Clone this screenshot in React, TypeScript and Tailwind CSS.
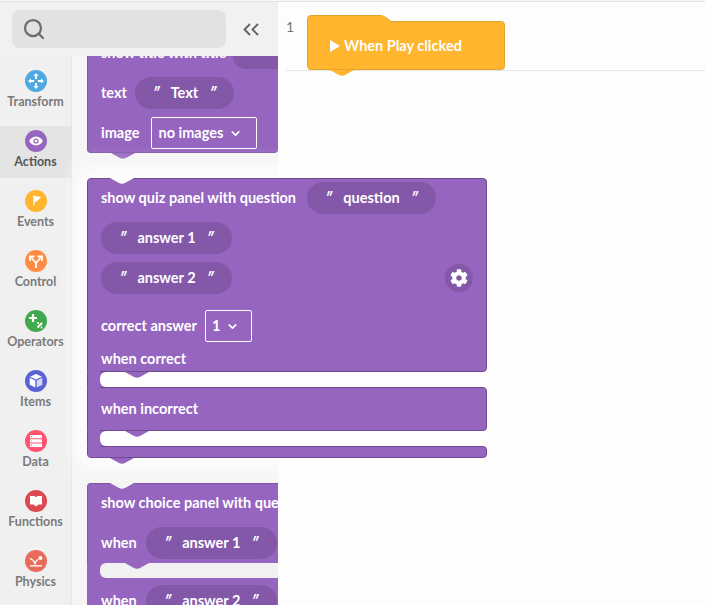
import { ChevronDown, Search } from "lucide-react";
import { FaCog } from "react-icons/fa";
import type { ReactNode } from "react";

const categories: { name: string; color: string; icon: ReactNode }[] = [
  {
    name: "Transform",
    color: "bg-[#4fa8e0]",
    icon: (
      <path
        fill="#fff"
        d="M11 3l2.600 3h-1.700v3.100H10.100V6H8.400zM11 19l-2.600-3h1.700v-3.100h1.800V16h1.700zM3 11l3-2.600v1.700h3.100v1.800H6v1.700zM19 11l-3 2.600v-1.700h-3.100v-1.800H16V8.400z"
      />
    ),
  },
  {
    name: "Actions",
    color: "bg-[#9565bf]",
    icon: (
      <>
        <path fill="#fff" d="M11 6.500c3.400 0 5.800 2.400 7 4.500-1.200 2.100-3.600 4.500-7 4.500S5.200 13.100 4 11c1.200-2.100 3.600-4.500 7-4.500z" />
        <circle cx="11" cy="11" r="2.600" fill="#9565bf" />
        <circle cx="11" cy="11" r="1.300" fill="#fff" />
      </>
    ),
  },
  {
    name: "Events",
    color: "bg-[#ffb52e]",
    icon: <path fill="#fff" d="M8 5.500l8 1.700-3.400 3.500-2.700 1.300-.6 3.500H8.500z" />,
  },
  {
    name: "Control",
    color: "bg-[#ff8c42]",
    icon: (
      <path
        fill="none"
        stroke="#fff"
        strokeWidth="1.800"
        d="M11 18v-5L6.500 8M11 13L15.500 8M5 11V6.500h4.500M17 11V6.500h-4.500"
      />
    ),
  },
  {
    name: "Operators",
    color: "bg-[#43a94f]",
    icon: (
      <path
        fill="none"
        stroke="#fff"
        strokeWidth="2.200"
        d="M4 8h8M8 4v8M12.500 17.500l4.500-4.500M12.300 13h1.500M15.800 17.500h1.500"
      />
    ),
  },
  {
    name: "Items",
    color: "bg-[#5b62d3]",
    icon: (
      <>
        <path fill="#fff" d="M11 4l6 2.700-6 2.700-6-2.700z" />
        <path fill="#fff" d="M4.700 7.800l5.600 2.600v7L4.700 14.700z" />
        <path fill="#fff" d="M17.300 7.800l-5.600 2.600v7l5.600-2.700z" opacity="0.75" />
      </>
    ),
  },
  {
    name: "Data",
    color: "bg-[#ff5470]",
    icon: (
      <>
        <rect x="5" y="5" width="12" height="3.300" rx="0.500" fill="#fff" />
        <rect x="5" y="9.300" width="12" height="3.300" rx="0.500" fill="#fff" />
        <rect x="5" y="13.600" width="12" height="3.300" rx="0.500" fill="#fff" />
        <circle cx="6.500" cy="6.600" r="0.600" fill="#ff5470" />
        <circle cx="6.500" cy="11" r="0.600" fill="#ff5470" />
        <circle cx="6.500" cy="15.200" r="0.600" fill="#ff5470" />
      </>
    ),
  },
  {
    name: "Functions",
    color: "bg-[#dc4a4f]",
    icon: <path fill="#fff" d="M5 6h4.500l1.500 1.200L12.500 6H17v8.500h-3.500L11 16.500l-2.500-2H5z" />,
  },
  {
    name: "Physics",
    color: "bg-[#e96b5c]",
    icon: (
      <>
        <circle cx="15.500" cy="8" r="1.900" fill="#fff" />
        <path fill="none" stroke="#fff" strokeWidth="1.300" d="M5 8.500c1.500.5 4 2 5 5 .5-2 1.500-3.500 3.500-4.500" />
        <rect x="5" y="15.200" width="12" height="1.300" fill="#fff" />
      </>
    ),
  },
];

function Pill({ label, className = "w-[131px]" }: { label: string; className?: string }) {
  return (
    <div className={`flex h-8 shrink-0 items-center justify-center gap-[11px] rounded-full bg-[#8358a8] text-white ${className}`}>
      <span className="italic">″</span>
      <span>{label}</span>
      <span className="italic">″</span>
    </div>
  );
}

function Dropdown({ label, className }: { label: string; className: string }) {
  return (
    <div className={`flex h-8 items-center gap-[6px] rounded-[2px] border border-white pl-[6px] text-white ${className}`}>
      <span>{label}</span>
      <ChevronDown size={13} strokeWidth={3} />
    </div>
  );
}

// bump under a stack block, hangs off the bottom edge
function Tab({ className, color = "#9565bf" }: { className: string; color?: string }) {
  return (
    <svg width="24" height="6" viewBox="0 0 24 6" className={`absolute ${className}`}>
      <path d="M0 0h24l-8.500 4.800Q12 6.600 8.500 4.800z" fill={color} />
    </svg>
  );
}

function Slot({ bg }: { bg: string }) {
  return (
    <div className="relative h-[15px] border-l border-[#6f4a8e] bg-transparent pl-[12px]">
      <div className="absolute inset-y-0 left-0 w-[20px] bg-[#9565bf]" />
      <div className={`relative h-full rounded-l-[6px] ${bg}`} />
      <Tab className="left-[37px] top-0" />
    </div>
  );
}

export default function App() {
  return (
    <div className="relative h-[605px] w-[705px] overflow-hidden bg-[#fdfdfd] pt-[2px] text-[14.5px] font-bold text-white [font-family:Lato,sans-serif]">
      <div className="absolute left-0 right-0 top-0 h-[2px] border-b border-[#e2e2e2] bg-[#f7f7f7]" />
      <div className="flex h-[603px]">
        {/* LEFT PANEL */}
        <div className="flex w-[278px] shrink-0 flex-col bg-[#f5f5f5]">
          <div className="flex h-[54px] items-center bg-[#f1f1f1] pl-3">
            <div className="flex h-[38px] w-[214px] items-center rounded-lg bg-[#e2e2e2] pl-[10px]">
              <Search size={24} strokeWidth={2.250} className="text-[#6e6e6e]" />
            </div>
            <svg width="16" height="13" viewBox="0 0 16 13" fill="none" stroke="#5f5f5f" strokeWidth="1.800" className="ml-[17px]">
              <path d="M7 1L1.500 6.500L7 12M15 1L9.500 6.500L15 12" />
            </svg>
          </div>
          <div className="flex min-h-0 flex-1">
            <div className="w-[72px] shrink-0 border-r border-[#e6e6e6] bg-[#f0f0f0] pt-[10px]">
              {categories.map((c) => (
                <div
                  key={c.name}
                  className={`mb-2 flex h-[52px] flex-col items-center pt-[4px] ${c.name === "Actions" ? "bg-[#e4e4e4] text-[#555]" : "text-[#7a7a7a]"}`}
                >
                  <div className={`flex h-[22px] w-[22px] items-center justify-center rounded-full ${c.color}`}>
                    <svg width="22" height="22" viewBox="0 0 22 22">
                      {c.icon}
                    </svg>
                  </div>
                  <span className="mt-[2px] text-[12.5px] font-bold leading-[16px]">{c.name}</span>
                </div>
              ))}
            </div>
            <div className="flex-1" />
          </div>
        </div>

        {/* CANVAS */}
        <div className="flex-1">
          <div className="flex h-[69px] pl-2 pt-[15px]">
            <div className="flex w-full border-b border-[#e6e6e6]">
              <span className="text-[14px] font-normal leading-5 text-[#777]">1</span>
            </div>
          </div>
        </div>
      </div>

      {/* blocks sit on a free canvas, so they are placed by coordinates */}
      <div className="absolute left-[87px] top-[56px] h-[110px] w-[191px] overflow-hidden">
        <div className="relative h-[97px] rounded-b-[4px] border-b border-l border-[#7f58a3] bg-[#9565bf]">
          <div className="flex h-[13px] pl-[13px]">
            <span className="-mt-[13px] leading-5">show title with title</span>
            <div className="ml-auto h-[13px] w-[45px] rounded-bl-[20px] bg-[#8358a8]" />
          </div>
          <div className="mt-[8px] flex h-[32px] items-center gap-[8px] pl-[13px]">
            <span>text</span>
            <Pill label="Text" className="w-[99px]" />
          </div>
          <div className="mt-2 flex h-[32px] items-center gap-[12px] pl-[13px]">
            <span>image</span>
            <Dropdown label="no images" className="w-[106px]" />
          </div>
        </div>
        <Tab className="left-[24px] top-[97px]" />
      </div>

      <div className="absolute left-[87px] top-[178px] w-[400px] shadow-[0_0_20px_10px_rgba(255,255,255,0.95)]">
        <div className="relative h-[194px] rounded-t-[4px] rounded-br-[4px] border border-[#6f4a8e] bg-[#9565bf] pl-[13px]">
          <svg width="24" height="6" viewBox="0 0 24 6" className="absolute left-[22px] -top-[1px]">
            <path d="M0 0h24l-8.500 4.800Q12 6.600 8.500 4.800z" fill="#fdfdfd" />
          </svg>
          <div className="mt-[3px] flex h-8 items-center gap-[11px]">
            <span>show quiz panel with question</span>
            <Pill label="question" className="w-[129px]" />
          </div>
          <div className="mt-2">
            <Pill label="answer 1" />
          </div>
          <div className="mt-2 flex items-center justify-between pr-[13px]">
            <Pill label="answer 2" />
            <div className="flex h-7 w-7 items-center justify-center rounded-full bg-[#8358a8]">
              <FaCog size={18} />
            </div>
          </div>
          <div className="mt-4 flex items-center gap-[8px]">
            <span>correct answer</span>
            <Dropdown label="1" className="w-[47px]" />
          </div>
          <div className="mt-[7px] leading-5">when correct</div>
        </div>
        <Slot bg="bg-white" />
        <div className="relative h-[44px] rounded-r-[4px] border border-[#6f4a8e] bg-[#9565bf] pl-[13px] pt-[11px] leading-5">when incorrect</div>
        <Slot bg="bg-white" />
        <div className="relative h-[12px] rounded-b-[4px] rounded-tr-[4px] border border-[#6f4a8e] bg-[#9565bf]" />
        {/* covers the segment lines across the left bar */}
        <div className="absolute bottom-[1px] left-[1px] top-[1px] w-[12px] bg-[#9565bf]" />
        <Tab className="left-[23px] top-[280px]" />
      </div>

      <div className="absolute left-[87px] top-[483px] h-[122px] w-[191px] overflow-hidden">
        <div className="relative rounded-tl-[4px] border-l border-t border-[#7f58a3] bg-[#9565bf] pb-1 pl-[13px]">
          <svg width="24" height="6" viewBox="0 0 24 6" className="absolute left-[22px] -top-[1px]">
            <path d="M0 0h24l-8.500 4.800Q12 6.600 8.500 4.800z" fill="#f5f5f5" />
          </svg>
          <div className="whitespace-nowrap pt-[9px] leading-5">show choice panel with question</div>
          <div className="mt-[14px] flex h-8 items-center gap-[9px]">
            <span>when</span>
            <Pill label="answer 1" />
          </div>
        </div>
        <div className="relative h-[15px] bg-[#9565bf] pl-[13px]">
          <div className="h-full rounded-l-[6px] bg-[#f1f1f1]" />
          <Tab className="left-[38px] top-0" />
        </div>
        <div className="flex h-10 items-center gap-[9px] bg-[#9565bf] pl-[14px] pt-[6px]">
          <span>when</span>
          <Pill label="answer 2" />
        </div>
      </div>

      {/* when play hat block */}
      <div className="absolute left-[307px] top-[15px]">
        <svg width="198" height="8" viewBox="0 0 198 8" className="absolute left-0 top-0 z-10">
          <path d="M0.500 8V4Q.5.5 4 .5H72Q76 .5 78 2L86 8" fill="#ffb52e" stroke="#e3a32c" />
        </svg>
        <div className="mt-[6px] flex h-[49px] w-[198px] items-center gap-[4px] rounded-[4px] rounded-tl-none border border-[#e3a32c] bg-[#ffb52e] pl-[22px]">
          <svg width="10" height="12" viewBox="0 0 10 12">
            <path d="M0 0l10 6-10 6z" fill="#fff" />
          </svg>
          When Play clicked
        </div>
        <Tab className="left-[23px] top-[55px]" color="#ffb52e" />
      </div>
    </div>
  );
}
